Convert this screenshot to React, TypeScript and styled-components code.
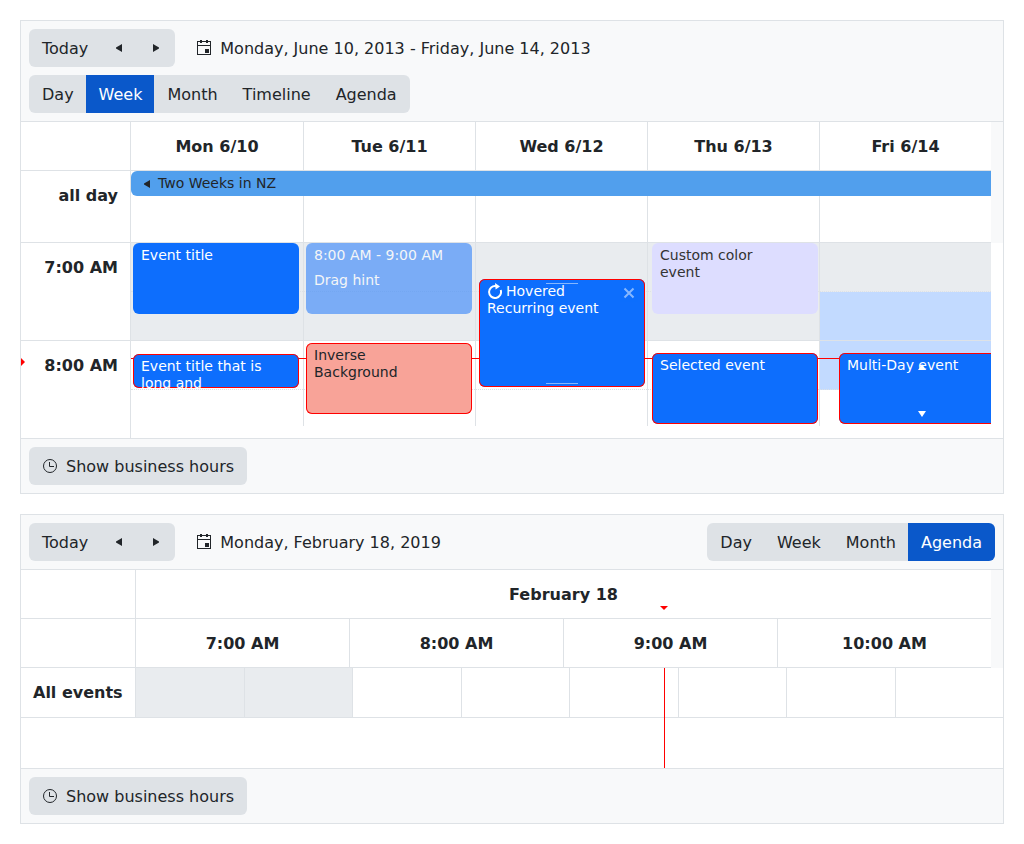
import React from "react";
import styled, { createGlobalStyle, css } from "styled-components";

const colors = {
  text: "#212529",
  border: "#dee2e6",
  surface: "#f8f9fa",
  button: "#dee2e6",
  active: "#0a58ca",
  event: "#0d6efd",
  nonWork: "#e9ecef",
  selection: "#c2daff",
  current: "#ff0000",
};

const GlobalStyle = createGlobalStyle`
  *, *::before, *::after { box-sizing: border-box; }
  body {
    margin: 0;
    background: #ffffff;
    color: ${colors.text};
    font: 16px/24px "DejaVu Sans", sans-serif;
  }
`;

const Page = styled.main`
  display: flex;
  flex-direction: column;
  gap: 20px;
  padding: 20px;
`;

const Panel = styled.section`
  border: 1px solid ${colors.border};
  background: #ffffff;
`;

const Toolbar = styled.header`
  display: flex;
  flex-wrap: wrap;
  align-items: center;
  gap: 8px;
  padding: 8px;
  background: ${colors.surface};
  border-bottom: 1px solid ${colors.border};
`;

const Footer = styled.footer`
  display: flex;
  padding: 8px;
  background: ${colors.surface};
  border-top: 1px solid ${colors.border};
`;

const Spacer = styled.span`
  flex: 1 0 0;
`;

const Icon = styled.svg`
  display: block;
  flex: none;
  width: 16px;
  height: 16px;
  fill: currentColor;
`;

const Button = styled.button<{ $active?: boolean; $flat?: boolean; $icon?: boolean }>`
  display: inline-flex;
  align-items: center;
  justify-content: center;
  gap: 8px;
  padding: ${(p) => (p.$icon ? "7px 10px 5px" : "7px 12px 5px")};
  border: 1px solid transparent;
  border-radius: 6px;
  background: ${(p) => (p.$active ? colors.active : p.$flat ? "transparent" : colors.button)};
  color: ${(p) => (p.$active ? "#ffffff" : colors.text)};
  font: inherit;
  white-space: nowrap;
  cursor: pointer;

  ${Icon} {
    margin-bottom: 2px;
  }
`;

const ButtonGroup = styled.div`
  display: flex;

  ${Button} {
    border-radius: 0;
  }
  ${Button} + ${Button} {
    margin-left: -1px;
  }
  ${Button}:first-child {
    border-radius: 6px 0 0 6px;
  }
  ${Button}:last-child {
    border-radius: 0 6px 6px 0;
  }
`;

const Gutter = styled.div`
  padding-right: 12px;
  background: ${colors.surface};
`;

const Table = styled.table`
  width: 100%;
  table-layout: fixed;
  border-collapse: separate;
  border-spacing: 0;
  background: #ffffff;
`;

const TimelineTable = styled(Table)`
  tr > :first-child {
    border-right: 0;
  }
  tr > * + * {
    border-left: 1px solid ${colors.border};
  }
`;

const LabelCol = styled.col<{ $width: number }>`
  width: ${(p) => p.$width}px;
`;

const CornerCell = styled.td`
  height: 49px;
  padding: 0;
  border-right: 1px solid ${colors.border};
  border-bottom: 1px solid ${colors.border};
`;

const HeadCell = styled.th`
  padding: 13px 0 11px;
  border-bottom: 1px solid ${colors.border};
  text-align: center;

  & + & {
    border-left: 1px solid ${colors.border};
  }
`;

const LabelCell = styled.th<{ $height?: number; $open?: boolean; $align?: "left" | "right" }>`
  height: ${(p) => p.$height ?? 49}px;
  padding: 13px 12px 11px;
  border-right: 1px solid ${colors.border};
  border-bottom: ${(p) => (p.$open ? 0 : 1)}px solid ${colors.border};
  text-align: ${(p) => p.$align ?? "right"};
  vertical-align: top;
  white-space: nowrap;
`;

type Fill = "none" | "nonWork" | "selection";

const fills: Record<Fill, string> = {
  none: "#ffffff",
  nonWork: colors.nonWork,
  selection: colors.selection,
};

const Slot = styled.td<{ $fill?: Fill; $half?: boolean; $height?: number }>`
  height: ${(p) => p.$height ?? 49}px;
  padding: 0;
  border-bottom: 1px ${(p) => (p.$half ? "dotted" : "solid")} ${colors.border};
  background: ${(p) => fills[p.$fill ?? "none"]};

  & + & {
    border-left: 1px solid ${colors.border};
  }
`;

const AllDayArea = styled.div`
  position: relative;
`;

const AllDayEvent = styled.div`
  position: absolute;
  top: 0;
  right: 0;
  left: 110px;
  display: flex;
  align-items: center;
  gap: 3px;
  height: 25px;
  padding: 0 8px;
  border-radius: 6px 0 0 6px;
  background: #519fed;
  font-size: 14px;
  line-height: 17px;
`;

const WeekBody = styled.div`
  position: relative;
  display: flex;
  height: 195px;
`;

const TimeColumn = styled.div`
  flex: none;
  width: 110px;
  overflow: hidden;
`;

const SlotViewport = styled.div`
  position: relative;
  flex: 1;
  margin: 0 12px 12px 0;
  overflow: hidden;
`;

const EventLayer = styled.div`
  position: absolute;
  inset: 0;
  display: grid;
  grid-template-columns: repeat(5, 1fr);
  column-gap: 7px;
  padding-left: 2px;
`;

const DayLane = styled.div`
  position: relative;
`;

type EventTone = "primary" | "inverse" | "custom";

const tones = {
  primary: css`
    background: ${colors.event};
    color: #ffffff;
  `,
  inverse: css`
    background: #f8a398;
    color: ${colors.text};
  `,
  custom: css`
    background: #ddddff;
    color: #333333;
  `,
};

const EventBox = styled.article<{
  $top: number;
  $height: number;
  $left?: number;
  $tone?: EventTone;
  $ongoing?: boolean;
  $hint?: boolean;
}>`
  position: absolute;
  top: ${(p) => p.$top}px;
  left: ${(p) => p.$left ?? 0}px;
  width: 100%;
  height: ${(p) => p.$height}px;
  padding: 4px 28px 4px 8px;
  border-radius: 6px;
  box-shadow: ${(p) => (p.$ongoing ? `inset 0 0 0 1px ${colors.current}` : "none")};
  opacity: ${(p) => (p.$hint ? 0.5 : 1)};
  overflow: hidden;
  font-size: 14px;
  line-height: 17px;
  ${(p) => tones[p.$tone ?? "primary"]}
`;

const EventTime = styled.div`
  margin-bottom: 8px;
  white-space: nowrap;
`;

const InlineIcon = styled(Icon)`
  display: inline-block;
  margin-right: 3px;
  vertical-align: top;
`;

const CloseButton = styled.button`
  position: absolute;
  top: 6px;
  right: 8px;
  padding: 0;
  border: 0;
  background: none;
  color: #ffffff;
  opacity: 0.5;
  cursor: pointer;
`;

const ResizeHandle = styled.span<{ $edge: "top" | "bottom" }>`
  position: absolute;
  ${(p) => p.$edge}: ${(p) => (p.$edge === "top" ? 4 : 3)}px;
  left: 50%;
  width: 32px;
  height: 1px;
  margin-left: -16px;
  background: #86b7fe;
`;

const MoreArrow = styled(Icon)<{ $edge: "top" | "bottom" }>`
  position: absolute;
  ${(p) => p.$edge}: ${(p) => (p.$edge === "top" ? 6 : 2)}px;
  left: 50%;
  margin-left: -8px;
`;

const NowLine = styled.div`
  position: absolute;
  top: 115px;
  right: 0;
  left: 0;
  height: 1px;
  background: ${colors.current};
`;

const NowArrow = styled.div`
  position: absolute;
  top: 115px;
  left: 0;
  border: 4px solid transparent;
  border-right-width: 0;
  border-left-color: ${colors.current};
`;

const Timeline = styled.div`
  position: relative;
`;

const TimelineRows = styled.div`
  min-height: 100px;
`;

const TimelineNow = styled.div`
  position: absolute;
  top: 36px;
  bottom: 0;
  left: calc(115px + (100% - 115px) * 0.609);
  width: 1px;

  &::before {
    content: "";
    position: absolute;
    top: 0;
    left: -4px;
    border: 4px solid transparent;
    border-bottom-width: 0;
    border-top-color: ${colors.current};
  }
  &::after {
    content: "";
    position: absolute;
    top: 62px;
    bottom: 0;
    left: 0;
    width: 1px;
    background: ${colors.current};
  }
`;

const LeftArrow = () => (
  <Icon viewBox="0 0 16 16" aria-hidden="true">
    <path d="M11 4v8L5 8.500v-1z" />
  </Icon>
);

const RightArrow = () => (
  <Icon viewBox="0 0 16 16" aria-hidden="true">
    <path d="M5 4v8l6-3.500v-1z" />
  </Icon>
);

const CalendarIcon = () => (
  <Icon viewBox="0 0 16 16" aria-hidden="true">
    <path
      fillRule="evenodd"
      d="M4 0h2v1h4V0h2v1h3v14H1V1h3zM2 2v3h12V2h-2v1h-2V2H6v1H4V2zM2 6v8h12V6zM9 9h4v4H9z"
    />
  </Icon>
);

const ClockIcon = () => (
  <Icon viewBox="0 0 16 16" aria-hidden="true">
    <path d="M7.5 4v4.5H12M8 1.5a6.5 6.5 0 1 0 0 13a6.5 6.5 0 1 0 0-13z" fill="none" stroke="currentColor" />
  </Icon>
);

const RepeatIcon = () => (
  <InlineIcon viewBox="0 0 16 16" role="img" aria-label="Recurring">
    <path d="M9 3.1A6 6 0 1 0 13.7 7" fill="none" stroke="currentColor" strokeWidth="2" />
    <path d="M8 0l5 3.500L8.600 6.500z" />
  </InlineIcon>
);

const CloseIcon = () => (
  <Icon viewBox="0 0 16 16" aria-hidden="true">
    <path d="M3.500 3.500l9 9M12.500 3.500l-9 9" fill="none" stroke="currentColor" strokeWidth="2" />
  </Icon>
);

const DateNavigation = ({ label }: { label: string }) => (
  <>
    <ButtonGroup>
      <Button>Today</Button>
      <Button $icon aria-label="Previous">
        <LeftArrow />
      </Button>
      <Button $icon aria-label="Next">
        <RightArrow />
      </Button>
    </ButtonGroup>
    <Button $flat>
      <CalendarIcon />
      {label}
    </Button>
    <Spacer />
  </>
);

const ViewSwitch = ({ views, active }: { views: string[]; active: string }) => (
  <ButtonGroup>
    {views.map((view) => (
      <Button key={view} $active={view === active} aria-pressed={view === active}>
        {view}
      </Button>
    ))}
  </ButtonGroup>
);

const BusinessHours = () => (
  <Footer>
    <Button>
      <ClockIcon />
      Show business hours
    </Button>
  </Footer>
);

const days = ["Mon 6/10", "Tue 6/11", "Wed 6/12", "Thu 6/13", "Fri 6/14"];

const slotRows: Fill[][] = [
  ["nonWork", "nonWork", "nonWork", "nonWork", "nonWork"],
  ["nonWork", "nonWork", "nonWork", "nonWork", "selection"],
  ["none", "none", "none", "none", "selection"],
  ["none", "none", "none", "none", "none"],
];

const WeekScheduler = () => (
  <Panel aria-label="Week schedule">
    <Toolbar>
      <DateNavigation label="Monday, June 10, 2013 - Friday, June 14, 2013" />
      <ViewSwitch views={["Day", "Week", "Month", "Timeline", "Agenda"]} active="Week" />
    </Toolbar>

    <Gutter>
      <Table>
        <colgroup>
          <LabelCol $width={110} />
        </colgroup>
        <thead>
          <tr>
            <CornerCell />
            {days.map((day) => (
              <HeadCell key={day} scope="col">
                {day}
              </HeadCell>
            ))}
          </tr>
        </thead>
      </Table>
      <AllDayArea>
        <Table>
          <colgroup>
            <LabelCol $width={110} />
          </colgroup>
          <tbody>
            <tr>
              <LabelCell scope="row" $height={72}>
                all day
              </LabelCell>
              {days.map((day) => (
                <Slot key={day} $height={72} />
              ))}
            </tr>
          </tbody>
        </Table>
        <AllDayEvent>
          <LeftArrow />
          Two Weeks in NZ
        </AllDayEvent>
      </AllDayArea>
    </Gutter>

    <WeekBody>
      <TimeColumn>
        <Table>
          <tbody>
            <tr>
              <LabelCell scope="row" $height={98}>
                7:00 AM
              </LabelCell>
            </tr>
            <tr>
              <LabelCell scope="row" $height={97} $open>
                8:00 AM
              </LabelCell>
            </tr>
          </tbody>
        </Table>
      </TimeColumn>
      <NowArrow />
      <SlotViewport>
        <Table>
          <tbody>
            {slotRows.map((row, r) => (
              <tr key={r}>
                {row.map((fill, c) => (
                  <Slot key={c} $fill={fill} $half={r % 2 === 0} />
                ))}
              </tr>
            ))}
          </tbody>
        </Table>
        <NowLine />
        <EventLayer>
          <DayLane>
            <EventBox $top={0} $height={71}>
              Event title
            </EventBox>
            <EventBox $top={111} $height={34} $ongoing>
              Event title that is long and
            </EventBox>
          </DayLane>
          <DayLane>
            <EventBox $top={0} $height={71} $hint>
              <EventTime>8:00 AM - 9:00 AM</EventTime>
              Drag hint
            </EventBox>
            <EventBox $top={100} $height={71} $tone="inverse" $ongoing>
              Inverse Background
            </EventBox>
          </DayLane>
          <DayLane>
            <EventBox $top={36} $height={108} $ongoing>
              <ResizeHandle $edge="top" />
              <RepeatIcon />
              Hovered Recurring event
              <CloseButton aria-label="Delete event">
                <CloseIcon />
              </CloseButton>
              <ResizeHandle $edge="bottom" />
            </EventBox>
          </DayLane>
          <DayLane>
            <EventBox $top={0} $height={71} $tone="custom">
              Custom color event
            </EventBox>
            <EventBox $top={110} $height={71} $ongoing>
              Selected event
            </EventBox>
          </DayLane>
          <DayLane>
            <EventBox $top={110} $height={71} $left={14} $ongoing>
              Multi-Day event
              <MoreArrow $edge="top" viewBox="0 0 16 16" aria-hidden="true">
                <path d="M4 11h8L8 5z" />
              </MoreArrow>
              <MoreArrow $edge="bottom" viewBox="0 0 16 16" aria-hidden="true">
                <path d="M4 5h8l-4 6z" />
              </MoreArrow>
            </EventBox>
          </DayLane>
        </EventLayer>
      </SlotViewport>
    </WeekBody>
    <BusinessHours />
  </Panel>
);

const TimelineScheduler = () => (
  <Panel aria-label="Timeline schedule">
    <Toolbar>
      <DateNavigation label="Monday, February 18, 2019" />
      <ViewSwitch views={["Day", "Week", "Month", "Agenda"]} active="Agenda" />
    </Toolbar>
    <Timeline>
      <Gutter>
        <TimelineTable>
          <colgroup>
            <LabelCol $width={114} />
          </colgroup>
          <thead>
            <tr>
              <CornerCell />
              <HeadCell scope="colgroup" colSpan={4}>
                February 18
              </HeadCell>
            </tr>
            <tr>
              <CornerCell />
              {["7:00 AM", "8:00 AM", "9:00 AM", "10:00 AM"].map((hour) => (
                <HeadCell key={hour} scope="col">
                  {hour}
                </HeadCell>
              ))}
            </tr>
          </thead>
        </TimelineTable>
      </Gutter>
      <TimelineRows>
        <TimelineTable>
          <colgroup>
            <LabelCol $width={114} />
          </colgroup>
          <tbody>
            <tr>
              <LabelCell scope="row" $height={50} $align="left">
                All events
              </LabelCell>
              {Array.from({ length: 8 }, (_, i) => (
                <Slot key={i} $height={50} $fill={i < 2 ? "nonWork" : "none"} />
              ))}
            </tr>
          </tbody>
        </TimelineTable>
      </TimelineRows>
      <TimelineNow />
    </Timeline>
    <BusinessHours />
  </Panel>
);

const App = () => (
  <>
    <GlobalStyle />
    <Page>
      <WeekScheduler />
      <TimelineScheduler />
    </Page>
  </>
);

export default App;
